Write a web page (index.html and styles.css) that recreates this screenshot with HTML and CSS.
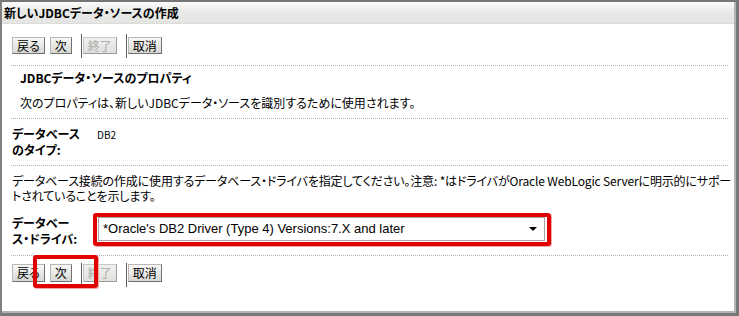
FILE: index.html
```html
<!DOCTYPE html>
<html lang="ja">
<head>
<meta charset="utf-8">
<link rel="stylesheet" href="styles.css">
</head>
<body>
<div class="window">
  <div class="frame">
    <div class="titlebar">新しいJDBCデータ・ソースの作成</div>
    <div class="content">
      <div class="toolbar">
        <button class="btn">戻る</button>
        <button class="btn">次</button>
        <span class="sep"></span>
        <button class="btn" disabled>終了</button>
        <span class="sep"></span>
        <button class="btn">取消</button>
      </div>
      <div class="rule"></div>
      <h2 class="section-title">JDBCデータ・ソースのプロパティ</h2>
      <p class="desc">次のプロパティは、新しいJDBCデータ・ソースを識別するために使用されます。</p>
      <div class="rule"></div>
      <div class="field">
        <div class="label">データベース<br>のタイプ:</div>
        <div class="value small">DB2</div>
      </div>
      <div class="rule"></div>
      <div class="note">
        <span class="line">データベース接続の作成に使用するデータベース・ドライバを指定してください。注意: *はドライバがOracle WebLogic Serverに明示的にサポー</span>
        <span class="line">トされていることを示します。</span>
      </div>
      <div class="field driver">
        <div class="label">データベー<br>ス・ドライバ:</div>
        <div class="value">
          <div class="select-wrap">
            <div class="select">
              <span class="select-text">*Oracle's DB2 Driver (Type 4) Versions:7.X and later</span>
              <span class="arrow"></span>
            </div>
            <span class="highlight hl-select"></span>
          </div>
        </div>
      </div>
      <div class="rule rule-bottom"></div>
      <div class="toolbar toolbar-bottom">
        <button class="btn">戻る</button>
        <button class="btn">次</button>
        <span class="sep"></span>
        <button class="btn" disabled>終了</button>
        <span class="sep"></span>
        <button class="btn">取消</button>
        <span class="highlight hl-next"></span>
      </div>
    </div>
  </div>
</div>
</body>
</html>
```
FILE: styles.css
```css
* { box-sizing: border-box; }
html, body { margin: 0; padding: 0; background: #fff; }
body {
  font-family: "Noto Sans CJK JP", "Liberation Sans", sans-serif;
  font-size: 12px;
  color: #000;
  font-feature-settings: "palt";
}
.window {
  width: 739px;
  height: 316px;
  border-top: 2px solid #767676;
  border-left: 2px solid #808080;
  border-right: 3px solid #787878;
  border-bottom: 3px solid #787878;
  overflow: hidden;
}
.frame {
  height: 100%;
  border-right: 2px solid #b4b4b4;
  border-bottom: 2px solid #b4b4b4;
  background: #fff;
}
.titlebar {
  height: 22px;
  line-height: 22px;
  padding-left: 2px;
  font-weight: bold;
  font-size: 12px;
  background: linear-gradient(#fbfbfb 0%, #e9eae8 45%, #e4e5e3 100%);
  border-bottom: 1px solid #dcdcda;
}
.content {
  padding: 0 6px 0 9px;
}
.toolbar {
  position: relative;
  display: flex;
  align-items: flex-start;
  margin-top: 10px;
  height: 24px;
  padding-left: 1px;
}
.btn {
  font-family: inherit;
  font-feature-settings: "palt";
  font-size: 12px;
  height: 17px;
  line-height: 14px;
  margin: 3px 0 0 0;
  padding: 0 4px;
  color: #000;
  background: linear-gradient(#f8f8f6, #d7d8d3);
  border: 1px solid;
  border-color: #b8b8b8 #707070 #707070 #b8b8b8;
  border-radius: 0;
}
.btn + .btn { margin-left: 5px; }
.btn:disabled {
  color: #a8a8a8;
  background: linear-gradient(#f0f0ee, #e0e1dd);
  border-color: #c8c8c8 #9a9a9a #9a9a9a #c8c8c8;
}
.sep {
  width: 1px;
  height: 24px;
  background: #606060;
  margin: 0 1px 0 9px;
}
.rule {
  margin-top: 7px;
  border-top: 1px dotted #b4b4b4;
  height: 0;
}
.section-title {
  margin: 4px 0 0 9px;
  font-size: 12px;
  line-height: 16px;
  font-weight: bold;
}
.desc {
  margin: 9px 0 0 9px;
  line-height: 16px;
}
.field {
  display: grid;
  grid-template-columns: 85px 1fr;
  margin: 7px 0 0 1px;
  line-height: 16px;
}
.label { font-weight: bold; }
.small { font-size: 10px; line-height: 16px; padding-top: 1px; }
.note {
  margin: 7px 0 0 1px;
  line-height: 15px;
  letter-spacing: -0.15px;
}
.line { display: block; white-space: nowrap; height: 15px; }
.driver { margin-top: 12px; height: 32px; }
.select-wrap {
  position: relative;
  width: 447px;
  margin-left: 1px;
  margin-top: 2px;
}
.select {
  display: flex;
  align-items: center;
  justify-content: space-between;
  height: 24px;
  border: 1px solid #a5a5a5;
  padding: 0 7px 0 4px;
  font-family: "Liberation Sans", Arial, sans-serif;
  font-size: 13px;
  background: #fff;
}
.arrow {
  width: 0;
  height: 0;
  border-left: 4px solid transparent;
  border-right: 4px solid transparent;
  border-top: 4px solid #000;
}
.highlight {
  position: absolute;
  border: 4px solid #e00000;
  border-radius: 3px;
  box-shadow: 1px 1px 0 #f2a8a8;
  pointer-events: none;
}
.hl-select {
  left: -5px;
  top: -4px;
  right: -6px;
  bottom: -5px;
}
.rule-bottom { margin-top: 8px; }
.toolbar-bottom { margin-top: 7px; }
.toolbar-bottom .btn { height: 18px; margin-top: 1px; }
.hl-next {
  left: 22px;
  top: -8px;
  width: 65px;
  height: 33px;
}
```
